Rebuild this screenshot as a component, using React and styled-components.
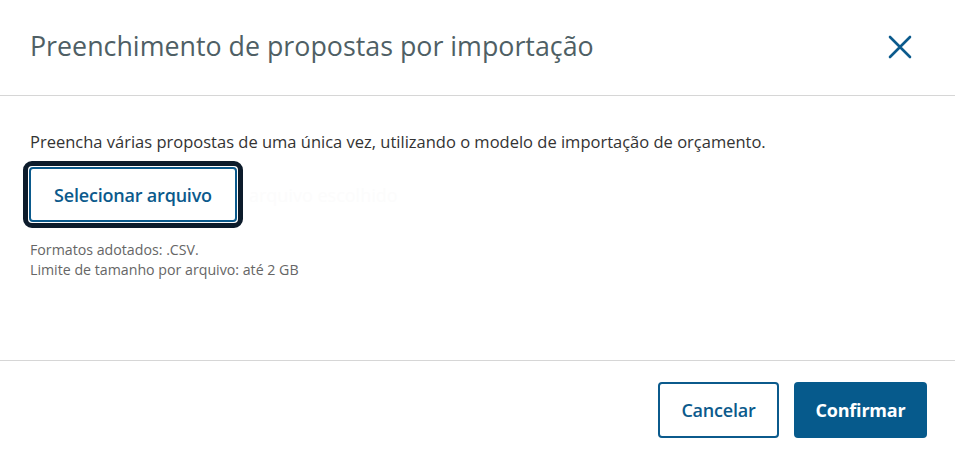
import * as React from "react";
import styled, { createGlobalStyle } from "styled-components";

const GlobalStyle = createGlobalStyle`
  html, body {
    margin: 0;
    padding: 0;
    background: #fff;
  }
  body {
    font-family: "Open Sans", Lato, sans-serif;
  }
  * {
    box-sizing: border-box;
  }
`;

function App() {
  return (
    <>
      <GlobalStyle />
      <Modal>
        <Header>
          <Title>Preenchimento de propostas por importação</Title>
          <CloseButton aria-label="Fechar">
            <svg width="24" height="24" viewBox="0 0 24 24">
              <path d="M2 2 L22 22 M22 2 L2 22" stroke="#0b5a8c" strokeWidth="2.6" strokeLinecap="round" />
            </svg>
          </CloseButton>
        </Header>
        <Body>
          <Intro>
            Preencha várias propostas de uma única vez, utilizando o modelo de importação de orçamento.
          </Intro>
          <UploadRow>
            <FocusRing>
              <OutlineButton $size="lg">Selecionar arquivo</OutlineButton>
            </FocusRing>
            <HiddenInput>arquivo escolhido</HiddenInput>
          </UploadRow>
          <Hint>
            Formatos adotados: .CSV.
            <br />
            Limite de tamanho por arquivo: até 2 GB
          </Hint>
        </Body>
        <Footer>
          <OutlineButton>Cancelar</OutlineButton>
          <PrimaryButton>Confirmar</PrimaryButton>
        </Footer>
      </Modal>
    </>
  );
}

const Modal = styled.div`
  width: 955px;
  height: 455px;
  display: flex;
  flex-direction: column;
  background: #fff;
`;

const Header = styled.header`
  height: 96px;
  display: flex;
  align-items: center;
  justify-content: space-between;
  padding: 0 43px 2px 30px;
  border-bottom: 1px solid #d6d6d6;
`;

const Title = styled.h1`
  margin: 0;
  font: 400 26.8px/1.2 "Open Sans", Lato, sans-serif;
  color: #4f5f65;
`;

const CloseButton = styled.button`
  border: 0;
  background: none;
  padding: 0;
  width: 24px;
  height: 24px;
  display: flex;
  cursor: pointer;
`;

const Body = styled.main`
  flex: 1;
  padding: 35px 30px 0;
`;

const Intro = styled.p`
  margin: 0;
  font: 400 16.5px/22px "Open Sans", Lato, sans-serif;
  color: #333;
`;

const UploadRow = styled.div`
  margin-top: 8px;
  display: flex;
  align-items: center;
  margin-left: -7px;
`;

const FocusRing = styled.div`
  border: 5px solid #0c1b2b;
  border-radius: 9px;
  padding: 1px;
  display: flex;
`;

const OutlineButton = styled.button`
  height: ${(p) => (p.$size === "lg" ? "55px" : "56px")};
  padding: 0 20px;
  min-width: ${(p) => (p.$size === "lg" ? "208px" : "121px")};
  border: 2px solid #0b5a8c;
  border-radius: 4px;
  background: #fff;
  color: #0b5a8c;
  font: 600 18px "Open Sans", Lato, sans-serif;
  letter-spacing: -0.2px;
  cursor: pointer;
`;

const HiddenInput = styled.span`
  margin-left: 6px;
  font: 400 18px "Open Sans", Lato, sans-serif;
  color: #fcfcfc;
`;

const Hint = styled.p`
  margin: 12px 0 0;
  font: 400 14.2px/20px "Open Sans", Lato, sans-serif;
  color: #666;
`;

const Footer = styled.footer`
  height: 95px;
  border-top: 1px solid #d6d6d6;
  display: flex;
  justify-content: flex-end;
  align-items: flex-start;
  gap: 15px;
  padding: 21px 28px 0 0;
`;

const PrimaryButton = styled.button`
  height: 56px;
  min-width: 133px;
  padding: 0 20px;
  border: 0;
  border-radius: 4px;
  background: #065a8c;
  color: #fff;
  font: 700 18px "Open Sans", Lato, sans-serif;
  letter-spacing: -0.2px;
  cursor: pointer;
`;

export default App;
